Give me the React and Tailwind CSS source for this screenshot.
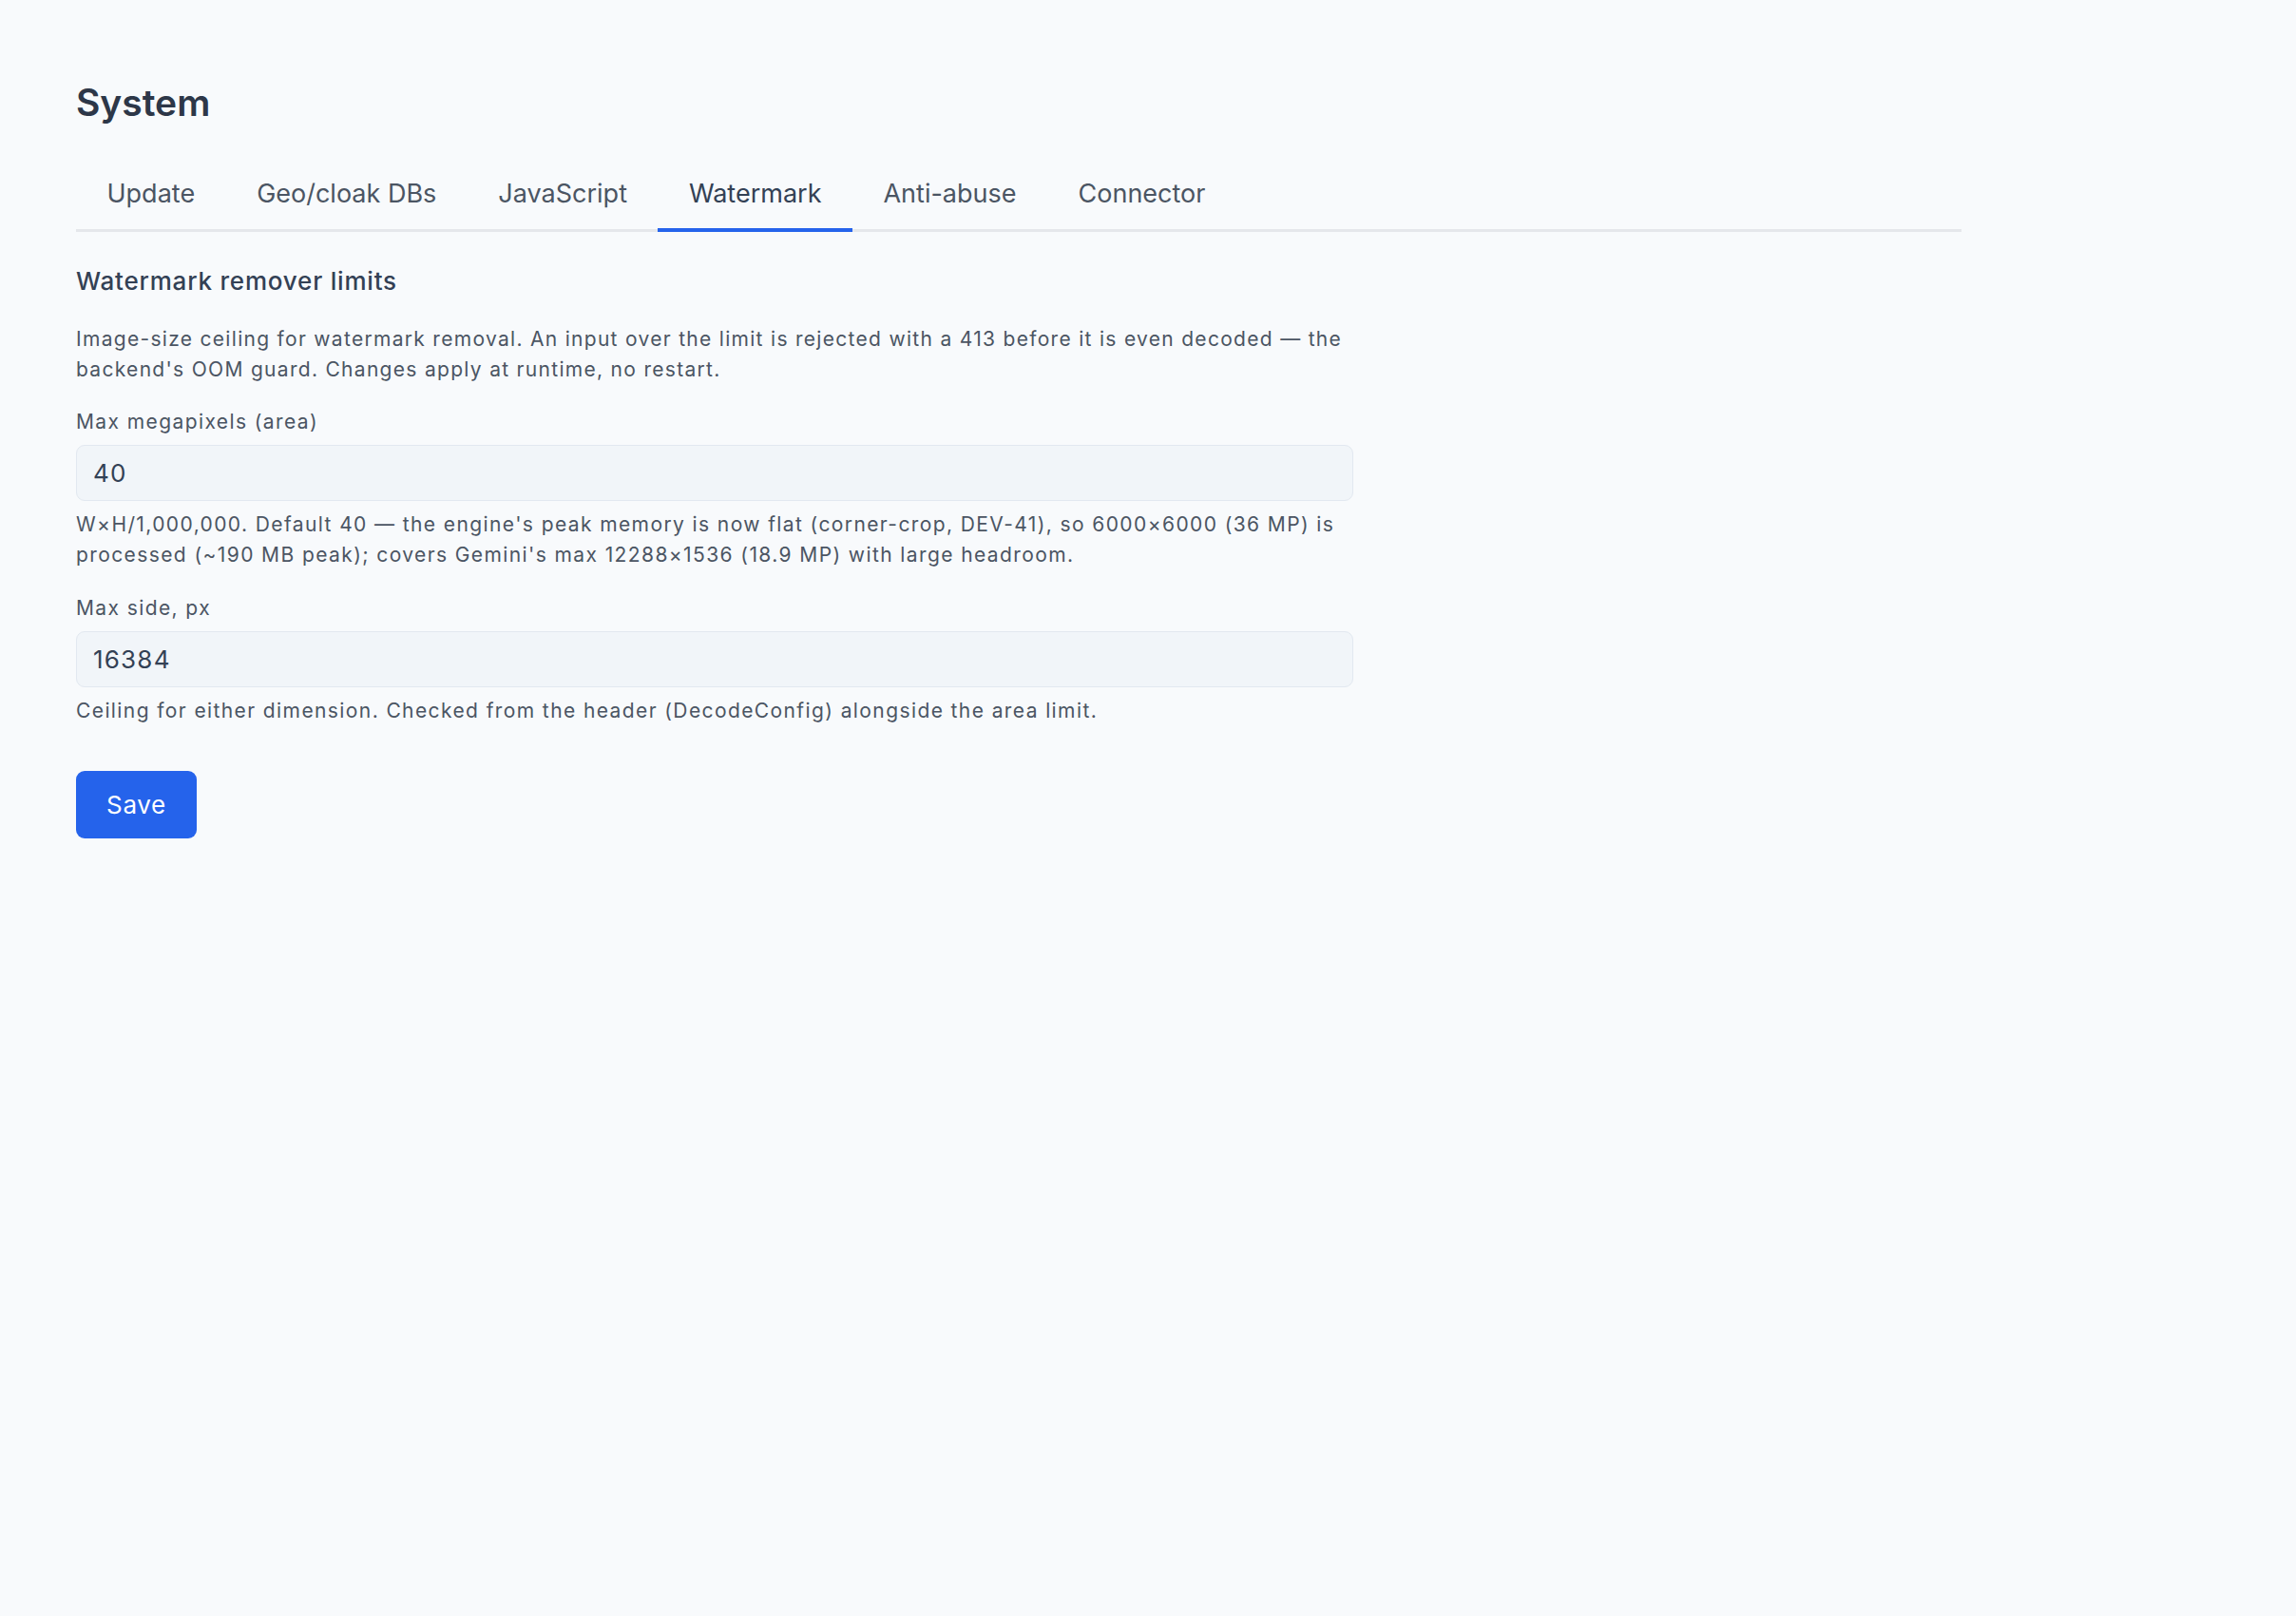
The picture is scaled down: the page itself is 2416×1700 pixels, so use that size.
import { useState } from 'react';

const tabs = ['Update', 'Geo/cloak DBs', 'JavaScript', 'Watermark', 'Anti-abuse', 'Connector'];

function Field({ label, value, onChange, help }) {
    return (
        <div className="flex flex-col">
            <label className="text-[21px] leading-[32px] tracking-[1.4px] text-[#4b5563]">{label}</label>
            <input
                type="text"
                value={value}
                onChange={(e) => onChange(e.target.value)}
                className="mt-[8px] h-[59px] w-full rounded-[9px] border-[1.5px] border-[#e2e8f0] bg-[#f1f5f9] px-[17px] text-[26px] tracking-[1.2px] text-[#334155] outline-none"
            />
            <p className="mt-[9px] text-[21px] leading-[32px] tracking-[1.4px] text-[#4b5563]">{help}</p>
        </div>
    );
}

export default function App() {
    const [active, setActive] = useState('Watermark');
    const [megapixels, setMegapixels] = useState('40');
    const [maxSide, setMaxSide] = useState('16384');

    return (
        <div className="min-h-screen w-full bg-[#f8fafc] px-[80px] pt-[84px] font-['Inter',sans-serif] text-[#334155]">
            <h1 className="text-[39px] leading-[48px] font-semibold text-[#2d3748]">System</h1>

            {/* tabs */}
            <div className="mt-[36px] flex w-[1984px] border-b-[3px] border-[#e5e7eb]">
                {tabs.map((t) => (
                    <button
                        key={t}
                        onClick={() => setActive(t)}
                        className={
                            t === active
                                ? '-mb-[3px] border-b-[4px] border-[#2563eb] px-[32.5px] pt-[16px] pb-[16px] text-[27px] leading-[40px] text-[#334155]'
                                : '-mb-[3px] border-b-[4px] border-transparent px-[32.5px] pt-[16px] pb-[16px] text-[27px] leading-[40px] text-[#4b5563]'
                        }
                    >
                        {t}
                    </button>
                ))}
            </div>

            {/* watermark section */}
            <div className="mt-[34px] w-[1344px]">
                <h2 className="text-[26px] leading-[36px] font-medium tracking-[0.8px] text-[#334155]">Watermark remover limits</h2>
                <p className="mt-[27px] text-[21px] leading-[32px] tracking-[1.3px] text-[#4b5563]">
                    Image-size ceiling for watermark removal. An input over the limit is rejected with a 413 before it is even
                    decoded — the backend's OOM guard. Changes apply at runtime, no restart.
                </p>

                <div className="mt-[23px] flex flex-col gap-[24px]">
                    <Field
                        label="Max megapixels (area)"
                        value={megapixels}
                        onChange={setMegapixels}
                        help="W×H/1,000,000. Default 40 — the engine's peak memory is now flat (corner-crop, DEV-41), so 6000×6000 (36 MP) is processed (~190 MB peak); covers Gemini's max 12288×1536 (18.9 MP) with large headroom."
                    />
                    <Field
                        label="Max side, px"
                        value={maxSide}
                        onChange={setMaxSide}
                        help="Ceiling for either dimension. Checked from the header (DecodeConfig) alongside the area limit."
                    />
                </div>

                <button className="mt-[47px] h-[71px] rounded-[9px] bg-[#2563eb] px-[32px] text-[26px] tracking-[0.7px] text-white">
                    Save
                </button>
            </div>
        </div>
    );
}
